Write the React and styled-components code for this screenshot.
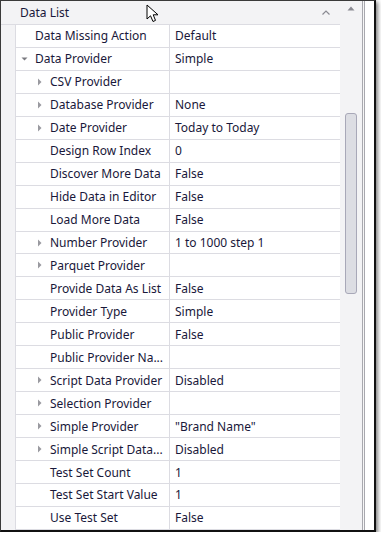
import React from 'react';
import styled, { createGlobalStyle } from 'styled-components';

const GlobalStyle = createGlobalStyle`
  html, body {
    margin: 0;
    padding: 0;
    background: #ffffff;
  }
  body {
    font-family: "Noto Sans", "DejaVu Sans", sans-serif;
  }
`;

const rows = [
  { level: 1, toggle: null, name: 'Data Missing Action', value: 'Default' },
  { level: 1, toggle: 'open', name: 'Data Provider', value: 'Simple' },
  { level: 2, toggle: 'closed', name: 'CSV Provider', value: '' },
  { level: 2, toggle: 'closed', name: 'Database Provider', value: 'None' },
  { level: 2, toggle: 'closed', name: 'Date Provider', value: 'Today to Today' },
  { level: 2, toggle: null, name: 'Design Row Index', value: '0' },
  { level: 2, toggle: null, name: 'Discover More Data', value: 'False' },
  { level: 2, toggle: null, name: 'Hide Data in Editor', value: 'False' },
  { level: 2, toggle: null, name: 'Load More Data', value: 'False' },
  { level: 2, toggle: 'closed', name: 'Number Provider', value: '1 to 1000 step 1' },
  { level: 2, toggle: 'closed', name: 'Parquet Provider', value: '' },
  { level: 2, toggle: null, name: 'Provide Data As List', value: 'False' },
  { level: 2, toggle: null, name: 'Provider Type', value: 'Simple' },
  { level: 2, toggle: null, name: 'Public Provider', value: 'False' },
  { level: 2, toggle: null, name: 'Public Provider Na...', value: '' },
  { level: 2, toggle: 'closed', name: 'Script Data Provider', value: 'Disabled' },
  { level: 2, toggle: 'closed', name: 'Selection Provider', value: '' },
  { level: 2, toggle: 'closed', name: 'Simple Provider', value: '"Brand Name"' },
  { level: 2, toggle: 'closed', name: 'Simple Script Data...', value: 'Disabled' },
  { level: 2, toggle: null, name: 'Test Set Count', value: '1' },
  { level: 2, toggle: null, name: 'Test Set Start Value', value: '1' },
  { level: 2, toggle: null, name: 'Use Test Set', value: 'False' },
];

const Frame = styled.div`
  position: relative;
  width: 373px;
  height: 529px;
  border-top: 1px solid #3a3a3a;
  border-left: 1px solid #3a3a3a;
  border-right: 2px solid #111;
  border-bottom: 2px solid #111;
  box-shadow: 2px 2px 4px rgba(0, 0, 0, 0.5);
  display: flex;
  overflow: hidden;
  color: #19183a;
  font-size: 12px;
`;

const Grid = styled.div`
  width: 339px;
  display: flex;
  flex-direction: column;
  background: #f3f3f5;
`;

const Category = styled.div`
  height: 23px;
  border-bottom: 1px solid #dcdce2;
  display: flex;
  align-items: center;
  justify-content: space-between;
  padding: 0 10px 0 19px;
  background: #f3f3f5;
`;

const Row = styled.div`
  display: grid;
  grid-template-columns: 14px 155px 1fr;
  height: 23px;
`;

const Gutter = styled.div`
  background: #f3f3f5;
`;

const NameCell = styled.div`
  position: relative;
  display: flex;
  align-items: center;
  background: #ffffff;
  border-left: 1px solid #dcdce2;
  border-right: 1px solid #dcdce2;
  border-bottom: 1px solid #dcdce2;
  padding-left: ${p => (p.$level === 1 ? 19 : 34)}px;
  white-space: nowrap;
  overflow: hidden;
`;

const ValueCell = styled.div`
  display: flex;
  align-items: center;
  background: #ffffff;
  border-bottom: 1px solid #dcdce2;
  padding-left: 5px;
  white-space: nowrap;
`;

const Toggle = styled.span`
  position: absolute;
  top: 50%;
  left: ${p => (p.$level === 1 ? 5 : 21)}px;
  transform: translateY(-50%);
  display: flex;
`;

const Scrollbar = styled.div`
  width: 22px;
  background: #f3f3f5;
  display: flex;
  flex-direction: column;
  align-items: center;
  padding-top: 5px;
  gap: 102px;
`;

const Thumb = styled.div`
  width: 10px;
  height: 179px;
  background: #dcdde3;
  border: 1px solid #a8a8b8;
  border-radius: 3px;
`;

const Splitter = styled.div`
  width: 3px;
  border-left: 1px solid #a8a8ae;
  border-right: 1px solid #a8a8ae;
  background: #f6f6f6;
  box-sizing: border-box;
`;

const Margin = styled.div`
  flex: 1;
  background: #ffffff;
`;

const Cursor = styled.svg`
  position: absolute;
  left: 145px;
  top: 3px;
`;

const Arrow = ({ open }) =>
  open ? (
    <svg width="7" height="5" viewBox="0 0 7 5">
      <path d="M0.5 1 L6.5 1 L3.5 4 Z" fill="#7a7a80" />
    </svg>
  ) : (
    <svg width="5" height="8" viewBox="0 0 5 8">
      <path d="M1 0.5 L4.5 4 L1 7.5 Z" fill="#9a9aa0" />
    </svg>
  );

const App = () => (
  <>
    <GlobalStyle />
    <Frame>
      <Grid>
        <Category>
          <span>Data List</span>
          <svg width="8" height="5" viewBox="0 0 8 5">
            <path d="M0.5 4.5 L4 1 L7.5 4.5" fill="none" stroke="#8a8a92" strokeWidth="1.2" />
          </svg>
        </Category>
        {rows.map(r => (
          <Row key={r.name}>
            <Gutter />
            <NameCell $level={r.level}>
              {r.toggle && (
                <Toggle $level={r.level}>
                  <Arrow open={r.toggle === 'open'} />
                </Toggle>
              )}
              {r.name}
            </NameCell>
            <ValueCell>{r.value}</ValueCell>
          </Row>
        ))}
      </Grid>
      <Scrollbar>
        <svg width="8" height="5" viewBox="0 0 8 5">
          <path d="M0.5 4.5 L4 0.5 L7.5 4.5 Z" fill="#8a8a92" />
        </svg>
        <Thumb />
      </Scrollbar>
      <Splitter />
      <Margin />
      <Cursor width="16" height="19" viewBox="0 0 16 19">
        <path d="M1 1 L1 15 L4.5 11.8 L7 17.5 L9.5 16.4 L7.2 10.8 L12 10.8 Z" fill="#ffffff" stroke="#000" strokeWidth="1" strokeLinejoin="round" />
      </Cursor>
    </Frame>
  </>
);

export default App;
